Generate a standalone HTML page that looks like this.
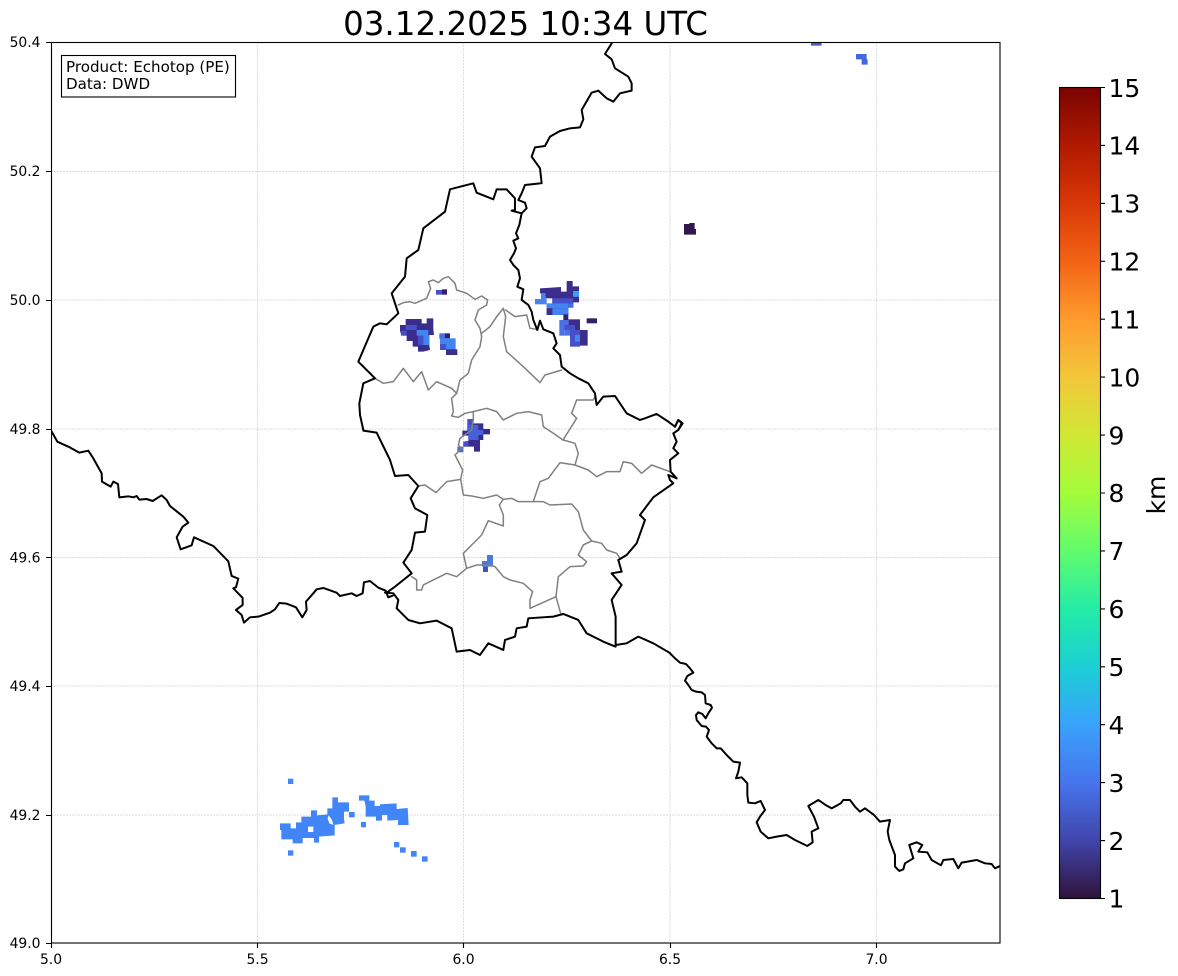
<!DOCTYPE html>
<html><head><meta charset="utf-8"><title>Echotop</title>
<style>
html,body{margin:0;padding:0;background:#fff;width:1178px;height:976px;overflow:hidden}
svg{display:block;font-family:"DejaVu Sans","Liberation Sans",sans-serif}
.b path{fill:none;stroke:#000;stroke-width:6;stroke-linejoin:round;stroke-linecap:round}
.g path{fill:none;stroke:#808080;stroke-width:4.5;stroke-linejoin:round;stroke-linecap:round}
</style></head><body>
<svg width="1178" height="976" viewBox="0 0 1178 976" xmlns="http://www.w3.org/2000/svg">
<defs>
<clipPath id="ax"><rect x="51" y="42" width="949" height="901"/></clipPath>
<linearGradient id="turbo" x1="0" y1="1" x2="0" y2="0">
<stop offset="0" stop-color="#30123b"/><stop offset=".0714" stop-color="#4145ab"/><stop offset=".1429" stop-color="#4675ed"/><stop offset=".2143" stop-color="#39a2fc"/><stop offset=".2857" stop-color="#1bcfd4"/><stop offset=".3571" stop-color="#24eca6"/><stop offset=".4286" stop-color="#61fc6c"/><stop offset=".5" stop-color="#a4fc3b"/><stop offset=".5714" stop-color="#d1e834"/><stop offset=".6429" stop-color="#f3c63a"/><stop offset=".7143" stop-color="#fe9b2d"/><stop offset=".7857" stop-color="#f36315"/><stop offset=".8571" stop-color="#d93806"/><stop offset=".9286" stop-color="#b11901"/><stop offset="1" stop-color="#7a0402"/>
</linearGradient>
</defs>
<text x="525.5" y="35" text-anchor="middle" font-size="32.5" fill="#000">03.12.2025 10:34 UTC</text>
<g stroke="#d0d0d0" stroke-width=".7" stroke-dasharray="2 1" fill="none">
<path d="M257.500 42V943M463.500 42V943M670 42V943M876.500 42V943M51 171.500H1000M51 300H1000M51 429H1000M51 557.500H1000M51 686H1000M51 815H1000"/>
</g>
<g clip-path="url(#ax)">
<!-- radar south -->
<g transform="translate(270,770) scale(.3333)" fill="#4285f6">
<rect x="54" y="26" width="16" height="16"/><rect x="54" y="241" width="16" height="16"/><rect x="372" y="216" width="16" height="16"/><rect x="390" y="232" width="17" height="16"/><rect x="423" y="243" width="17" height="17"/><rect x="456" y="259" width="17" height="16"/><rect x="273" y="156" width="15" height="16"/><rect x="237" y="126" width="17" height="16"/>
<path fill-rule="evenodd" d="M30 160H62V175H78V157H94V140H123V121H141V136L172 133V115H187V82H204V97H237V125H222V147L224 160L192 165H194V196L147 200V218H132V204H98V220H68V208H34V180H30ZM114 170V186H130V170ZM176 136L186 150L190 165L178 160L173 146Z"/>
<path d="M267 76H298V92H314V108H330V103L380 100V117L413 114L416 165H384V150L352 152V135H336V152H318V140H287V108L283 92H267Z"/>
</g>
<!-- radar NW blob -->
<g transform="translate(390,270) scale(.3333)">
<path fill="#3a2d8c" d="M47 147H95V160H110V145H130V177L132 195H118V225L120 240L100 245H84V230H68V213H50V197H34L30 182V165H47Z"/>
<path fill="#4650c8" d="M47 165H80V180H47ZM34 182H50V197H34ZM84 197H100V225H84Z"/>
<path fill="#4285f0" d="M80 180H115V197H118V225H100V197H80Z"/>
<rect x="148" y="190" width="17" height="17" fill="#4a6fe0"/><rect x="165" y="190" width="15" height="15" fill="#33206a"/>
<path fill="#4285f0" d="M150 205H197V240H168V222H150Z"/>
<rect x="150" y="222" width="18" height="18" fill="#4650c8"/><rect x="168" y="238" width="34" height="17" fill="#3a2d8c"/>
<rect x="138" y="60" width="17" height="14" fill="#4650c8"/><rect x="155" y="58" width="16" height="16" fill="#33206a"/>
</g>
<!-- radar NE blob -->
<g transform="translate(525,275) scale(.3333)">
<path fill="#3a2d8c" d="M45 40L108 36V50H125V18H143V34H162V50H145V65H162V82H145V98H130V120H65V88H82V70H60V55H45Z"/>
<rect x="145" y="48" width="17" height="17" fill="#3aa0f5"/>
<rect x="48" y="55" width="14" height="17" fill="#4a80f0"/><rect x="30" y="72" width="35" height="16" fill="#4a80f0"/>
<rect x="82" y="70" width="63" height="15" fill="#4650c8"/><rect x="65" y="85" width="65" height="15" fill="#4285f0"/><rect x="82" y="100" width="48" height="20" fill="#4285f0"/><rect x="130" y="85" width="15" height="13" fill="#4a6fe0"/>
<rect x="65" y="100" width="17" height="20" fill="#3a2d8c"/>
<rect x="115" y="118" width="15" height="17" fill="#33206a"/>
<rect x="130" y="133" width="35" height="17" fill="#3a2d8c"/>
<path fill="#3a2d8c" d="M150 150H165V165H188V212H150Z"/>
<path fill="#4a70e8" d="M103 135H130V150H135V182H118V165H103Z"/>
<rect x="103" y="165" width="15" height="17" fill="#4a70e8"/>
<rect x="118" y="150" width="32" height="15" fill="#4650c8"/>
<rect x="135" y="165" width="30" height="50" fill="#4650c8"/>
<rect x="150" y="180" width="15" height="20" fill="#4285f0"/>
<rect x="185" y="130" width="31" height="15" fill="#33206a"/>
</g>
<!-- radar centre -->
<g transform="translate(450,410) scale(.3333)">
<path fill="#3a2d8c" d="M52 40H100V57H120V73H100V90H90V125H72V110H40V95L55 93V77H37V62H52Z"/>
<rect x="52" y="27" width="18" height="18" fill="#4650c8"/>
<path fill="#4660d8" d="M52 45H85V60H100V75H85V90H55V62H52Z"/>
<rect x="40" y="95" width="15" height="15" fill="#4650c8"/>
<rect x="22" y="110" width="18" height="17" fill="#4d70d0"/>
</g>
<!-- radar small south -->
<g transform="translate(340,410) scale(.3333)">
<path fill="#4a7ae0" d="M441 435H459V470H426V453H441Z"/>
<rect x="429" y="470" width="15" height="16" fill="#4050c0"/>
</g>
<!-- radar top -->
<g transform="translate(500,30) scale(.3333)">
<rect x="933" y="36" width="32" height="11" fill="#4a60d0"/>
<path fill="#4168e0" d="M1068 72H1100V88H1103V104H1085V88H1068Z"/>
<path fill="#30184f" d="M552 582H568V579H584V597H588V614H552Z"/>
</g>
<!-- gray -->
<g class="g" transform="translate(340,170) scale(.3333)">
<path d="M175 405L190 398L210 395L225 400L260 385L272 355L265 335L280 330L295 338L310 325L325 320L345 340L350 360L380 370L405 388L425 378L443 390L440 405L415 420L405 450L420 475L425 500L420 530L395 570L385 610L360 630L350 670L335 685L340 725L335 738L355 742L375 730L400 725L440 715L470 725L490 750L530 730L565 725L605 735L610 770L640 790L669 810"/>
<path d="M425 490L450 470L470 440L490 415L497 440L490 500L500 545L550 590L600 638L615 615L665 600"/>
<path d="M497 420L525 440L560 435L570 475L590 478"/>
<path d="M105 625L130 640L160 635L190 595L220 635L245 605L265 660L290 635L335 655L350 670"/>
<path d="M765 680L760 690L710 690L695 730L710 745L685 785L669 810"/>
</g>
<g class="g" transform="translate(340,410) scale(.3333)">
<path d="M400 5L400 30L395 60L360 85L355 105L365 115L345 135L368 180L362 208L370 255L395 258L430 265L470 255L490 268L515 265L535 275L580 275L600 215L625 205L660 158L705 165L715 130L705 100L670 90"/>
<path d="M362 208L320 215L288 248L255 225L235 228"/>
<path d="M705 165L745 180L770 200L800 185L840 185L850 155L875 160L905 190L935 165L990 185"/>
<path d="M580 275L610 275L630 285L695 282L715 305L730 360L755 393L730 405L715 435L740 455L730 468L690 470L655 500L648 560L570 595L570 570L578 545L550 520L510 510L490 500L465 470L450 465L410 465L380 475L370 430L425 375L445 332L490 348L490 315L478 285L490 268"/>
<path d="M380 475L350 500L320 490L250 525L245 540L230 540L230 510L215 500"/>
<path d="M755 393L785 400L800 420L830 430L840 445"/>
<path d="M648 560L662 610"/>
</g>
<!-- black -->
<g class="b" transform="translate(40,420) scale(.3333)">
<path d="M35 35L52 65L85 80L118 98L145 92L160 115L185 160L186 185L212 200L220 185L234 192L238 232L265 229L280 232L290 228L298 239L320 237L338 243L365 226L380 240L390 258L430 290L445 308L428 320L410 352L422 388L455 376L462 352L520 378L565 424L575 468L595 476L588 502L580 505L608 534L608 555L588 570L605 585L612 608L630 592L655 590L690 578L705 568L718 549L740 551L768 562L787 592L800 570L798 545L820 520L830 508L850 504L890 518L900 528L935 520L950 528L968 520L972 487L990 483L1015 503L1037 512L1040 520L1045 532L1058 527"/>
</g>
<g class="b" transform="translate(340,410) scale(.3333)">
<path d="M135 548L160 550L175 570L170 595L205 630L240 640L290 632L335 655L350 725L390 720L420 735L445 700L490 720L495 690L525 680L530 655L560 650L565 625L640 620L670 612L715 630L740 670L790 695L827 710L827 620L815 570L845 525L815 490L845 485L835 450L860 435L890 400L915 330L900 315L940 262L1000 220L990 210L985 195L1010 205L992 185L990 150L1015 130L1000 115L1010 95L1000 70L1015 60L1025 40L1015 30L1005 50"/>
<path d="M140 548L165 530L190 510L215 490L190 458L215 420L225 368L255 365L262 315L225 295L212 265L235 228L205 195L165 198L150 150L110 68L70 62"/>
<path d="M827 705L860 700L895 680L940 700L990 729"/>
</g>
<g class="b" transform="translate(340,170) scale(.3333)">
<path d="M70 780L60 735L58 700L70 640L105 625L55 575L100 470L120 460L140 463L175 430L155 370L195 320L200 265L235 240L250 175L315 125L330 58L400 40L410 68L460 88L470 58L500 58L525 85L525 120L515 122L545 130L560 115L555 98L535 90L545 70L555 45L600 40"/>
<path d="M545 130L538 165L528 190L535 205L520 212L528 235L522 250L510 270L520 285L535 300L540 325L532 350L550 358L545 390L565 405L575 425L580 450L592 480L600 452L610 478L640 490L650 520L640 535L660 555L665 590L690 610L715 625L745 640L765 670L770 705L790 680L825 678L860 730L900 750L915 745L950 732L985 755L1005 770L1015 750L1028 760L1015 780"/>
</g>
<g class="b" transform="translate(500,30) scale(.3333)">
<path d="M125 460L120 415L95 380L105 352L135 348L150 320L180 303L210 295L240 292L250 268L245 240L265 205L275 188L295 182L320 205L340 215L360 190L395 182L395 160L385 140L345 115L335 88L315 72L335 40L345 20"/>
</g>
<g class="b" transform="translate(670,640) scale(.3333)">
<path d="M0 40L15 55L30 68L48 72L60 85L70 98L52 108L45 122L55 135L65 150L78 155L95 157L105 165L107 190L122 195L126 203L115 220L107 235L97 222L85 217L78 225L80 240L95 258L108 260L117 270L110 290L125 310L140 325L152 325L170 345L190 365L210 368L205 395L198 415L215 412L232 430L232 465L235 488L255 490L272 483L285 510L270 530L260 547L272 575L295 595L320 590L350 585L375 600L412 618L428 607L425 575L445 565L432 530L415 498L445 480L470 497L485 505L512 490L520 480L540 480L555 500L570 515L585 505L612 525L630 545L660 540L653 575L658 600L675 645L675 680L688 693L700 688L705 670L730 655L718 615L740 607L757 615L745 635L772 637L785 660L813 676L820 660L850 657L865 685L875 668L920 660L945 670L965 672L975 685L990 678"/>
</g>
</g>
<!-- frame -->
<rect x="51.500" y="42.500" width="948.500" height="900.500" fill="none" stroke="#000" stroke-width="1.1"/>
<path d="M51.500 943v5M257.500 943v5M463.500 943v5M670.500 943v5M876.500 943v5M51 42.500h-5M51 171.500h-5M51 300.500h-5M51 429.500h-5M51 557.500h-5M51 686.500h-5M51 815.500h-5M51 943.500h-5" stroke="#000" stroke-width="1.1" fill="none"/>
<g font-size="13.9" fill="#000" text-anchor="middle">
<text x="51" y="964">5.0</text><text x="257.500" y="964">5.5</text><text x="463.500" y="964">6.0</text><text x="670" y="964">6.5</text><text x="876.500" y="964">7.0</text>
</g>
<g font-size="13.9" fill="#000" text-anchor="end">
<text x="40.500" y="47">50.4</text><text x="40.500" y="176">50.2</text><text x="40.500" y="305">50.0</text><text x="40.500" y="434">49.8</text><text x="40.500" y="562.500">49.6</text><text x="40.500" y="691">49.4</text><text x="40.500" y="820">49.2</text><text x="40.500" y="948">49.0</text>
</g>
<!-- note -->
<rect x="61.500" y="55.500" width="174" height="41.500" fill="#fff" stroke="#000" stroke-width="1.1"/>
<text x="66" y="72" font-size="15.1" fill="#000">Product: Echotop (PE)</text>
<text x="66" y="89" font-size="15.1" fill="#000">Data: DWD</text>
<!-- colorbar -->
<rect x="1059.500" y="87.500" width="41" height="811" fill="url(#turbo)" stroke="#000" stroke-width="1.1"/>
<path d="M1100 87.500h5M1100 145.400h5M1100 203.400h5M1100 261.300h5M1100 319.200h5M1100 377.100h5M1100 435.100h5M1100 493h5M1100 550.900h5M1100 608.900h5M1100 666.800h5M1100 724.700h5M1100 782.600h5M1100 840.600h5M1100 898.500h5" stroke="#000" stroke-width="1.1"/>
<g font-size="25" fill="#000">
<text x="1108.500" y="97">15</text><text x="1108.500" y="154.500">14</text><text x="1108.500" y="212.500">13</text><text x="1108.500" y="270.500">12</text><text x="1108.500" y="328.500">11</text><text x="1108.500" y="386.500">10</text><text x="1108.500" y="444.500">9</text><text x="1108.500" y="502">8</text><text x="1108.500" y="560">7</text><text x="1108.500" y="618">6</text><text x="1108.500" y="676">5</text><text x="1108.500" y="734">4</text><text x="1108.500" y="792">3</text><text x="1108.500" y="850">2</text><text x="1108.500" y="907.500">1</text>
</g>
<text transform="translate(1165,495) rotate(-90)" font-size="25" text-anchor="middle" fill="#000">km</text>
</svg>
</body></html>
